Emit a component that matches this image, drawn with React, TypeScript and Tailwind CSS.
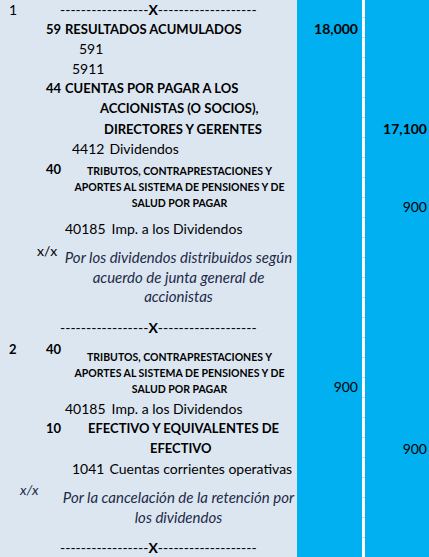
const rows =
  'grid-rows-[18px_20px_20px_20px_20px_20px_20px_20px_60px_20px_70px_9px_20px_61px_20px_20px_20px_20px_50px_10px_19px]'

function Dashes({ row }: { row: string }) {
  return (
    <div className={`${row} col-start-1 flex items-center pl-[60px] text-[14px] text-black`}>
      <span>-----------------</span>
      <span className="font-bold">X</span>
      <span>-------------------</span>
    </div>
  )
}

function Tributos({ row, top }: { row: string; top: string }) {
  return (
    <div
      className={`${row} ${top} col-start-1 flex w-[297px] flex-col items-center pl-[62px] text-center text-[10.5px] font-bold leading-[16px] text-black`}
    >
      <span>TRIBUTOS, CONTRAPRESTACIONES Y</span>
      <span>APORTES AL SISTEMA DE PENSIONES Y DE</span>
      <span>SALUD POR PAGAR</span>
    </div>
  )
}

export default function App() {
  return (
    <div
      className={`grid h-[557px] w-[429px] grid-cols-[297px_65px_3px_64px] ${rows} overflow-hidden bg-[#dce6f1] font-['Lato',sans-serif] text-[14px] text-black`}
    >
      {/* column fills */}
      <div className="col-start-2 row-span-full row-start-1 bg-[#00b0f0]" />
      <div className="col-start-3 row-span-full row-start-1 bg-[repeating-linear-gradient(to_bottom,#ffffff_0px,#ffffff_17px,#d3dbd6_17px,#d3dbd6_18px,#ffffff_18px,#ffffff_20px)]" />
      <div className="col-start-4 row-span-full row-start-1 bg-[#00b0f0]" />

      {/* asiento 1 */}
      <div className="col-start-1 row-start-1 flex items-center pl-[9px]">1</div>
      <Dashes row="row-start-1" />

      <div className="col-start-1 row-start-2 flex items-center pl-[46px] pt-[3px] text-[13px] font-bold">
        <span className="w-[19px]">59</span>
        <span>RESULTADOS ACUMULADOS</span>
      </div>
      <div className="col-start-2 row-start-2 flex items-center justify-end pr-[4px] font-bold">18,000</div>

      <div className="col-start-1 row-start-3 flex items-center pl-[79px]">591</div>
      <div className="col-start-1 row-start-4 flex items-center pl-[72px]">5911</div>

      <div className="col-start-1 row-start-5 flex items-center pl-[46px] pt-[2px] text-[13px] font-bold">
        <span className="w-[19px]">44</span>
        <span>CUENTAS POR PAGAR A LOS</span>
      </div>
      <div className="col-start-1 row-start-6 flex items-center pl-[100px] pt-[2px] text-[13px] font-bold">
        ACCIONISTAS (O SOCIOS),
      </div>
      <div className="col-start-1 row-start-7 flex items-center pl-[104px] pt-[3px] text-[13px] font-bold">
        DIRECTORES Y GERENTES
      </div>
      <div className="col-start-4 row-start-7 flex items-center justify-end pr-[2px] font-bold">17,100</div>

      <div className="col-start-1 row-start-8 flex items-center pl-[72px]">
        <span className="mr-[5px]">4412</span>
        <span>Dividendos</span>
      </div>

      <div className="col-start-1 row-start-9 pl-[46px] pt-[2px] text-[13px] font-bold">40</div>
      <Tributos row="row-start-9" top="pt-[5px]" />
      <div className="col-start-4 row-start-9 flex items-end justify-end pb-[1px] pr-[2px]">900</div>

      <div className="col-start-1 row-start-10 flex items-center pl-[65px]">
        <span className="mr-[6px]">40185</span>
        <span>Imp. a los Dividendos</span>
      </div>

      <div className="col-start-1 row-start-11 pl-[37px] pt-[2px]">x/x</div>
      <div className="col-start-1 row-start-11 flex flex-col items-center pl-[60px] pt-[10px] text-[15px] italic leading-[19.5px] text-[#1c2a48]">
        <span>Por los dividendos distribuidos según</span>
        <span>acuerdo de junta general de</span>
        <span>accionistas</span>
      </div>

      <Dashes row="row-start-13" />

      {/* asiento 2 */}
      <div className="col-start-1 row-start-14 flex pl-[9px] pt-[3px] text-[13px] font-bold">
        <span className="w-[37px]">2</span>
        <span>40</span>
      </div>
      <Tributos row="row-start-14" top="pt-[12px]" />
      <div className="col-start-2 row-start-14 flex items-end justify-end pb-[1px] pr-[4px]">900</div>

      <div className="col-start-1 row-start-15 flex items-center pl-[65px]">
        <span className="mr-[6px]">40185</span>
        <span>Imp. a los Dividendos</span>
      </div>

      <div className="col-start-1 row-start-16 flex items-center pl-[46px] pt-[2px] text-[13px] font-bold">
        <span className="w-[42px]">10</span>
        <span>EFECTIVO Y EQUIVALENTES DE</span>
      </div>
      <div className="col-start-1 row-start-17 flex items-center pl-[150px] pt-[2px] text-[13px] font-bold">EFECTIVO</div>
      <div className="col-start-4 row-start-17 flex items-center justify-end pr-[2px]">900</div>

      <div className="col-start-1 row-start-18 flex items-center pl-[72px]">
        <span className="mr-[5px]">1041</span>
        <span>Cuentas corrientes operativas</span>
      </div>

      <div className="col-start-1 row-start-19 pl-[20px] pt-[1px] italic text-[#1c2a48]">x/x</div>
      <div className="col-start-1 row-start-19 flex flex-col items-center pl-[60px] pt-[9px] text-[15px] italic leading-[20px] text-[#1c2a48]">
        <span>Por la cancelación de la retención por</span>
        <span>los dividendos</span>
      </div>

      <Dashes row="row-start-21" />
    </div>
  )
}
